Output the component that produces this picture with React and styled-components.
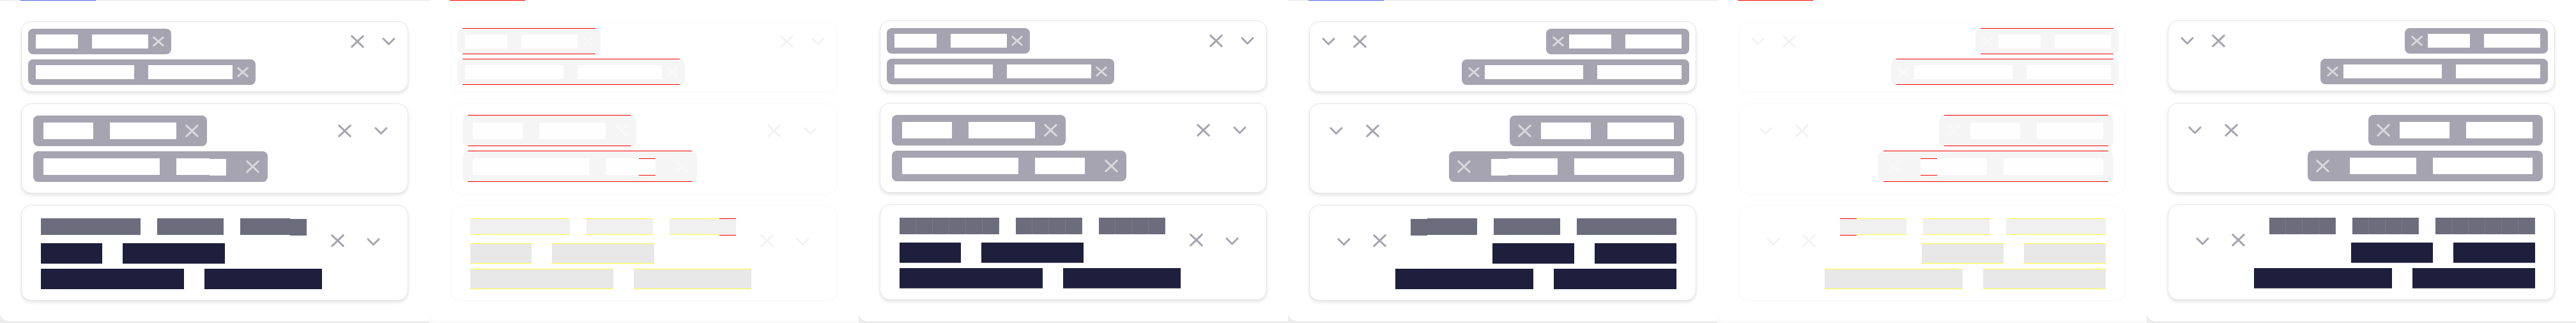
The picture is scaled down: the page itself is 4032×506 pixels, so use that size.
import React from "react"
import styled, { createGlobalStyle, ThemeProvider, css } from "styled-components"

const GlobalStyle = createGlobalStyle`
    html, body {
        margin: 0;
        padding: 0;
    }
    body {
        width: 4032px;
        height: 506px;
        overflow: hidden;
        background: #eeeeee;
        font-family: "Liberation Sans", Arial, sans-serif;
    }
`

// one palette per kind of shot: the reference, the diff overlay, the new render
const themes = {
    expected: {
        panel: "#ececec",
        topLine: "#e5e5e5",
        bar: "#4b6bdc",
        border: "#e4e4e7",
        shadow: "0 3px 5px rgba(0, 0, 0, 0.10)",
        chip: "#a5a4b0",
        chipText: "#ffffff",
        chipX: "#d9d8de",
        icon: "#a5a4b0",
        label: "#6c6c7c",
        value: "#1d1f3c",
        step: "shift",
        marks: false,
        glyphs: false,
    },
    diff: {
        panel: "#fafafa",
        topLine: "#fefefe",
        bar: "#ff0000",
        border: "#f9f9f9",
        shadow: "0 3px 5px rgba(0, 0, 0, 0.015)",
        chip: "#f5f5f5",
        chipText: "#fefefe",
        chipX: "#f8f8f8",
        icon: "#f3f3f3",
        label: "#f0f0f0",
        value: "#e8e8e8",
        step: "red",
        marks: true,
        glyphs: false,
    },
    actual: {
        panel: "#ececec",
        topLine: null,
        bar: null,
        border: "#e4e4e7",
        shadow: "0 3px 5px rgba(0, 0, 0, 0.10)",
        chip: "#a5a4b0",
        chipText: "#ffffff",
        chipX: "#d9d8de",
        icon: "#a5a4b0",
        label: "#6c6c7c",
        value: "#1d1f3c",
        step: null,
        marks: false,
        glyphs: true,
    },
}

// word widths in visual order, left to right (block glyphs, one em per letter)
const ltrData = {
    small: [{ words: [66, 88] }, { words: [154, 132] }],
    large: [{ words: [78, 104] }, { words: [182, 78], tail: 17, step: true }],
    label: [156, 104, 104],
    rows: [[96, 160], [224, 184]],
}

const rtlData = {
    small: [{ words: [66, 88] }, { words: [154, 132] }],
    large: [{ words: [78, 104] }, { words: [104, 156], tail: 17, step: true }],
    label: [104, 104, 156],
    rows: [[128, 128], [216, 192]],
}

const cardSizes = {
    sm: { pt: 11, pb: 10, ps: 10, pe: 19 },
    lg: { pt: 18, pb: 17, ps: 17.5, pe: 30.5 },
    text: { pt: 20, pb: 17, ps: 29.5, pe: 43 },
}

const chipSizes = {
    sm: { h: 40, text: 22, ps: 12, pe: 10.8, gap: 22, xGap: 7.2, xw: 18, xh: 16, step: 22 },
    lg: { h: 48, text: 26, ps: 16.2, pe: 12.8, gap: 26, xGap: 14.6, xw: 21, xh: 20, step: 26 },
}

const Strip = styled.main`
    display: flex;
    width: 4032px;
    height: 506px;
`

const Panel = styled.section`
    flex: none;
    width: 672px;
    height: 506px;
    background: ${({ theme }) => theme.panel};
`

const Frame = styled.div`
    position: relative;
    box-sizing: border-box;
    height: 503px;
    display: flex;
    flex-direction: column;
    align-items: flex-start;
    gap: 18px;
    padding: 32px 0 0 33px;
    background: #ffffff;
    border-top: ${({ theme }) => (theme.topLine ? `1px solid ${theme.topLine}` : "0")};
    border-bottom-left-radius: 14px;

    ${({ theme }) =>
        theme.bar &&
        css`
            &::before {
                content: "";
                position: absolute;
                top: -1px;
                left: 32px;
                width: 118px;
                height: 1px;
                background: ${theme.bar};
            }
        `}
`

const Card = styled.div`
    box-sizing: border-box;
    width: 605.5px;
    display: flex;
    align-items: flex-start;
    background: #ffffff;
    border: 1px solid ${({ theme }) => theme.border};
    border-radius: 16px;
    box-shadow: ${({ theme }) => theme.shadow};
    padding-block: ${({ $size }) => `${cardSizes[$size].pt}px ${cardSizes[$size].pb}px`};
    padding-inline: ${({ $size }) => `${cardSizes[$size].ps}px ${cardSizes[$size].pe}px`};
`

const ChipList = styled.div`
    flex: 1;
    min-width: 0;
    display: flex;
    flex-wrap: wrap;
    gap: 8px;
`

const Chip = styled.div`
    position: relative;
    flex: none;
    display: flex;
    align-items: center;
    height: ${({ $size }) => chipSizes[$size].h}px;
    padding-inline: ${({ $size }) => `${chipSizes[$size].ps}px ${chipSizes[$size].pe}px`};
    border-radius: 8px;
    background: ${({ theme }) => theme.chip};

    ${({ theme }) =>
        theme.marks &&
        css`
            &::before,
            &::after {
                content: "";
                position: absolute;
                left: 8px;
                right: 8px;
                height: 1px;
                background: #ff0000;
            }
            &::before {
                top: -1px;
            }
            &::after {
                bottom: 0;
            }
        `}
`

const ChipLabel = styled.div`
    display: flex;
    gap: ${({ $size }) => chipSizes[$size].gap}px;
    height: ${({ $size }) => chipSizes[$size].text}px;
    margin-top: -1px;
    margin-inline-end: ${({ $size, $tail }) => chipSizes[$size].xGap + ($tail || 0)}px;
`

const toneColor = (theme, tone) =>
    tone === "chip" ? theme.chipText : tone === "label" ? theme.label : theme.value

const Word = styled.span`
    position: relative;
    display: block;
    flex: none;
    height: 100%;
    width: ${({ $w, $cut }) => ($cut ? $w - $cut : $w)}px;
    margin-inline-end: ${({ $cut }) => $cut || 0}px;
    background-color: ${({ theme, $tone }) => toneColor(theme, $tone)};

    ${({ theme, $tone }) =>
        theme.glyphs &&
        $tone === "label" &&
        css`
            background-image: repeating-linear-gradient(
                90deg,
                transparent 0 25px,
                rgba(255, 255, 255, 0.09) 25px 26px
            );
        `}
    ${({ theme, $tone }) =>
        theme.glyphs &&
        $tone === "value" &&
        css`
            box-shadow: inset 0 -1px 0 rgba(255, 255, 255, 0.3);
        `}
    ${({ theme, $tone }) =>
        theme.glyphs &&
        $tone === "chip" &&
        css`
            box-shadow: inset 0 -1px 0 rgba(0, 0, 0, 0.1);
        `}
    ${({ theme, $tone }) =>
        theme.marks &&
        $tone !== "chip" &&
        css`
            box-shadow: inset 0 1px 0 #ffff3c, inset 0 -1px 0 #ffff3c;
        `}

    ${({ $cut, theme, $tone }) =>
        $cut &&
        css`
            &::after {
                content: "";
                position: absolute;
                inset-inline-start: 100%;
                width: ${$cut}px;
                top: ${theme.step === "shift" ? 1 : 0}px;
                height: ${theme.step === "shift" ? "100%" : "calc(100% + 1px)"};
                box-sizing: border-box;
                background: ${toneColor(theme, $tone)};
                ${theme.step === "red" &&
                css`
                    border-top: 1px solid #ff0000;
                    border-bottom: 1px solid #ff0000;
                `}
            }
        `}
`

const Indicators = styled.div`
    flex: none;
    display: flex;
    align-items: center;
    gap: ${({ $gap }) => $gap}px;
    height: ${({ $h }) => $h}px;
    margin-top: ${({ $mt }) => $mt || 0}px;
`

const Glyph = styled.svg`
    display: block;
    flex: none;
    color: ${({ theme, $light }) => ($light ? theme.chipX : theme.icon)};
    transform: translateY(${({ $drop }) => $drop || 0}px);
`

const TextBlock = styled.div`
    flex: 1;
    min-width: 0;
    display: flex;
    flex-direction: column;
`

const LabelRow = styled.div`
    display: flex;
    gap: 26px;
    height: 26px;
    margin-bottom: 13px;
`

const ValueRows = styled.div`
    display: flex;
    flex-direction: column;
    gap: 8px;
`

const ValueRow = styled.div`
    display: flex;
    gap: 32px;
    height: 32px;
`

function Cross({ w, h, light, sw = 3 }) {
    const p = sw / 2 + 0.2
    return (
        <Glyph
            $light={light}
            width={w}
            height={h}
            viewBox={`0 0 ${w} ${h}`}
            fill="none"
            stroke="currentColor"
            strokeWidth={sw}
            strokeLinecap="round"
        >
            <path d={`M${p} ${p}L${w - p} ${h - p}M${w - p} ${p}L${p} ${h - p}`} />
        </Glyph>
    )
}

function Chevron({ drop }) {
    return (
        <Glyph
            $drop={drop}
            width="21"
            height="12"
            viewBox="0 0 21 12"
            fill="none"
            stroke="currentColor"
            strokeWidth="3"
            strokeLinecap="round"
            strokeLinejoin="round"
        >
            <path d="M2 1.7L10.5 10.2L19 1.7" />
        </Glyph>
    )
}

// visual order comes in left to right, rtl lays the dom out from the right
const inDomOrder = (list, rtl) => (rtl ? [...list].reverse() : list)

function Words({ list, tone, rtl, step }) {
    const ordered = inDomOrder(list, rtl)
    return ordered.map((w, i) => (
        <Word key={i} $w={w} $tone={tone} $cut={i === ordered.length - 1 ? step : 0} />
    ))
}

function Tag({ size, item, rtl, showStep }) {
    const s = chipSizes[size]
    return (
        <Chip $size={size}>
            <ChipLabel $size={size} $tail={item.tail}>
                <Words
                    list={item.words}
                    tone="chip"
                    rtl={rtl}
                    step={item.step && showStep ? s.step : 0}
                />
            </ChipLabel>
            <Cross w={s.xw} h={s.xh} light />
        </Chip>
    )
}

function ChipCard({ size, items, rtl, showStep, gap }) {
    return (
        <Card $size={size} dir={rtl ? "rtl" : "ltr"}>
            <ChipList>
                {items.map((item, i) => (
                    <Tag key={i} size={size} item={item} rtl={rtl} showStep={showStep} />
                ))}
            </ChipList>
            <Indicators $gap={gap} $h={chipSizes[size].h}>
                <Cross w={21} h={20} />
                <Chevron />
            </Indicators>
        </Card>
    )
}

function TextCard({ data, rtl, showStep }) {
    return (
        <Card $size="text" dir={rtl ? "rtl" : "ltr"}>
            <TextBlock>
                <LabelRow>
                    <Words list={data.label} tone="label" rtl={rtl} step={showStep ? 26 : 0} />
                </LabelRow>
                <ValueRows>
                    {data.rows.map((row, i) => (
                        <ValueRow key={i}>
                            <Words list={row} tone="value" rtl={rtl} />
                        </ValueRow>
                    ))}
                </ValueRows>
            </TextBlock>
            <Indicators $gap={35} $h={20} $mt={25}>
                <Cross w={21} h={20} />
                <Chevron drop={2} />
            </Indicators>
        </Card>
    )
}

function Shot({ mode, rtl }) {
    const theme = themes[mode]
    const data = rtl ? rtlData : ltrData
    const showStep = Boolean(theme.step)
    return (
        <ThemeProvider theme={theme}>
            <Panel>
                <Frame>
                    <ChipCard size="sm" items={data.small} rtl={rtl} showStep={showStep} gap={28} />
                    <ChipCard size="lg" items={data.large} rtl={rtl} showStep={showStep} gap={36} />
                    <TextCard data={data} rtl={rtl} showStep={showStep} />
                </Frame>
            </Panel>
        </ThemeProvider>
    )
}

const App = () => {
    return (
        <>
            <GlobalStyle />
            <Strip>
                <Shot mode="expected" />
                <Shot mode="diff" />
                <Shot mode="actual" />
                <Shot mode="expected" rtl />
                <Shot mode="diff" rtl />
                <Shot mode="actual" rtl />
            </Strip>
        </>
    )
}

export default App
